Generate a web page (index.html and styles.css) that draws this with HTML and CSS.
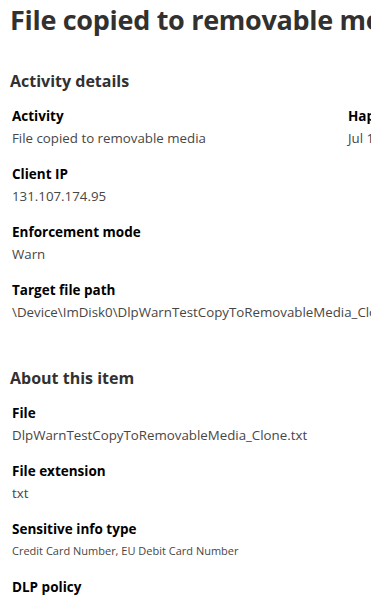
FILE: index.html
```html
<!DOCTYPE html>
<html lang="en">
<head>
    <meta charset="UTF-8">
    <meta name="viewport" content="width=device-width, initial-scale=1.0">
    <title>File copied to removable media</title>
    <link rel="stylesheet" href="styles.css">
</head>
<body>
    <div class="panel">
        <h1 class="title">File copied to removable media</h1>

        <section class="section">
            <h2>Activity details</h2>
            <div class="row">
                <div class="field">
                    <div class="label">Activity</div>
                    <div class="value">File copied to removable media</div>
                </div>
                <div class="field">
                    <div class="label">Happened</div>
                    <div class="value">Jul 15, 2021 9:42 AM</div>
                </div>
            </div>
            <div class="field">
                <div class="label">Client IP</div>
                <div class="value">131.107.174.95</div>
            </div>
            <div class="field">
                <div class="label">Enforcement mode</div>
                <div class="value">Warn</div>
            </div>
            <div class="field">
                <div class="label">Target file path</div>
                <div class="value">\Device\ImDisk0\DlpWarnTestCopyToRemovableMedia_Clone.txt</div>
            </div>
        </section>

        <section class="section about">
            <h2>About this item</h2>
            <div class="field">
                <div class="label">File</div>
                <div class="value">DlpWarnTestCopyToRemovableMedia_Clone.txt</div>
            </div>
            <div class="field">
                <div class="label">File extension</div>
                <div class="value">txt</div>
            </div>
            <div class="field">
                <div class="label">Sensitive info type</div>
                <div class="value small">Credit Card Number, EU Debit Card Number</div>
            </div>
            <div class="field">
                <div class="label">DLP policy</div>
                <div class="value">Default DLP policy - Protect sensitive info</div>
            </div>
        </section>
    </div>
</body>
</html>
```

FILE: styles.css
```css
* {
    box-sizing: border-box;
    margin: 0;
    padding: 0;
}

body {
    font-family: 'Open Sans', sans-serif;
    background: #fff;
    color: #323130;
    overflow: hidden;
}

.panel {
    padding: 0 0 0 10px;
    white-space: nowrap;
}

.title {
    font-size: 27px;
    font-weight: 700;
    letter-spacing: -0.3px;
    line-height: 40px;
    color: #323130;
}

.section h2 {
    font-size: 16px;
    font-weight: 700;
    line-height: 22px;
    color: #323130;
    margin-top: 30px;
    margin-bottom: 14px;
}

.about h2 {
    margin-top: 43px;
}

.row {
    display: grid;
    grid-template-columns: 336px 200px;
}

.field {
    padding-left: 2px;
    margin-bottom: 14px;
}

.label {
    font-size: 13.5px;
    font-weight: 700;
    line-height: 20px;
    color: #000;
}

.value {
    font-size: 13.3px;
    line-height: 24px;
    color: #484644;
}

.value.small {
    font-size: 11px;
}
```
